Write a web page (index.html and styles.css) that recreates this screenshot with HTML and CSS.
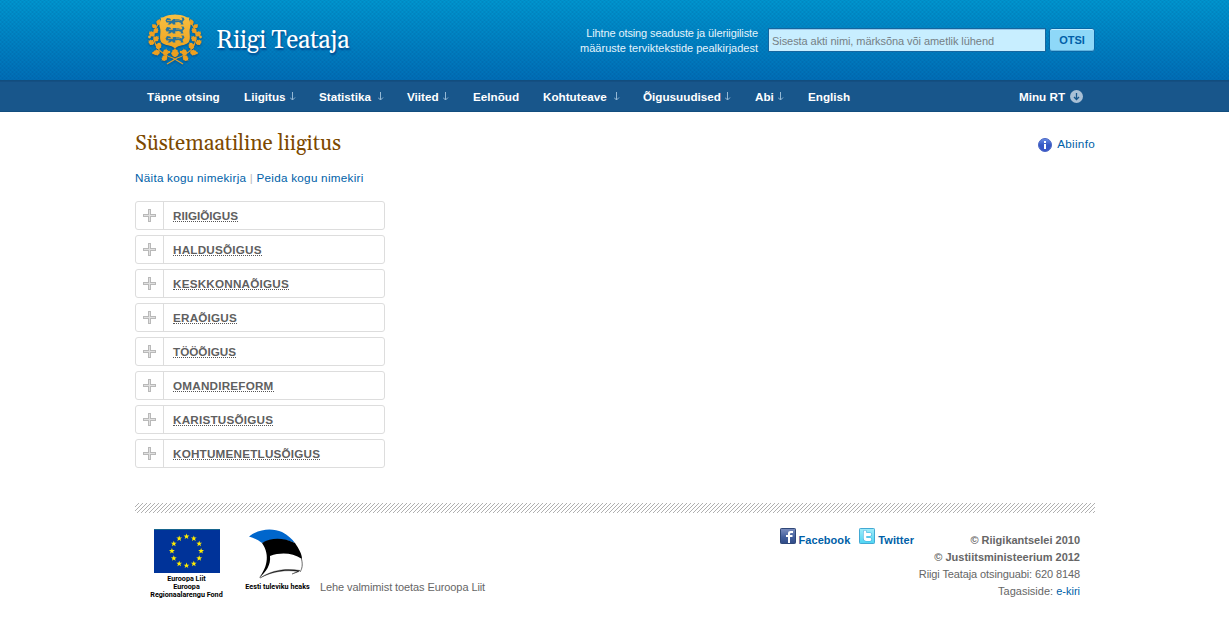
FILE: index.html
```html
<!DOCTYPE html>
<html lang="et">
<head>
<meta charset="utf-8">
<title>Riigi Teataja</title>
<link rel="stylesheet" href="styles.css">
</head>
<body>
<header class="header">
  <div class="wrap header-row">
    <a class="brand">
      <svg class="crest" width="56" height="54" viewBox="0 0 56 54">
        <defs>
          <linearGradient id="gold" x1="0" y1="0" x2="0" y2="54" gradientUnits="userSpaceOnUse"><stop offset="0" stop-color="#f8c144"/><stop offset="1" stop-color="#e8950f"/></linearGradient>
          <path id="leaf" fill="#ecA020" d="M0 0C-1-1-2.6-.6-2.3-2.2C-4-3-3-4.500-2.200-4.600C-3-6.300-1.300-6.600-.8-6.500L0-8L.8-6.500C1.300-6.600 3-6.300 2.200-4.600C3-4.500 4-3 2.300-2.200C2.600-.6 1-1 0 0Z"/>
          <g id="branch">
            <path d="M36 51L26 45C16 42 9 37 7 26C6 20 9 13 13 9" fill="none" stroke="#e8a024" stroke-width="1.200"/>
            <use href="#leaf" transform="translate(11 12) rotate(15) scale(.8)"/>
            <use href="#leaf" transform="translate(9 15) rotate(-45) scale(.7)"/>
            <use href="#leaf" transform="translate(7 20) rotate(40) scale(.8)"/>
            <use href="#leaf" transform="translate(7 23) rotate(-48) scale(.85)"/>
            <use href="#leaf" transform="translate(7 28) rotate(45) scale(.85)"/>
            <use href="#leaf" transform="translate(7 31) rotate(-60) scale(.85)"/>
            <use href="#leaf" transform="translate(10 36) rotate(28) scale(.95)"/>
            <use href="#leaf" transform="translate(13 39) rotate(-100) scale(.95)"/>
            <use href="#leaf" transform="translate(18 43) rotate(10) scale(.95)"/>
            <use href="#leaf" transform="translate(20 43) rotate(-130) scale(.9)"/>
            <circle cx="2.500" cy="24" r="1.400"/><circle cx="12" cy="31" r="1.200"/><circle cx="22" cy="39" r="1.300"/><circle cx="6.500" cy="40" r="1.300"/>
          </g>
          <path id="lion" d="M0 3L1.500 .5L4.500 1L6 3L8 1.500L13 1.500L16 3L17 1.500L15.500 0L18 0L19 2L17 4.500L18 7H15L15.500 5.500L13 4.500L9.500 5L10 7H7.500L6.500 5.500L4.500 7H2L4 5L1 5Z"/>
        </defs>
        <g fill="url(#gold)">
          <use href="#branch"/>
          <use href="#branch" transform="matrix(-1 0 0 1 56 0)"/>
          <path d="M13.500 4.500C17 5 19 1.800 23 2C26 2 27 1.600 28 1.600C29 1.600 30 2 33 2C37 1.800 39 5 42.500 4.500C41 8 45 11 43 15C41.500 20 44.500 25 41.500 29.500C38 33 32 31.500 28 35.500C24 31.500 18 33 14.500 29.500C11.500 25 14.500 20 13 15C11 11 15 8 13.500 4.500Z"/>
          <use href="#leaf" transform="translate(28 44.500) scale(1.200)"/>
        </g>
        <g fill="#2574a0"><use href="#lion" x="18.500" y="4.500"/><use href="#lion" x="18.500" y="13.500"/><use href="#lion" x="18.500" y="22.500"/></g>
        <path d="M20 7.500H25M28 7H33M22 16.500H26M29 16H34M21 25.500H26M29 25H33" stroke="#d9a437" stroke-width=".8"/>
      </svg>
      <span class="brand-name">Riigi Teataja</span>
    </a>
    <form class="search">
      <label class="search-label" for="q"><span class="tight">Lihtne otsing seaduste ja üleriigiliste</span><br>määruste terviktekstide pealkirjadest</label>
      <input class="search-input" id="q" type="text" placeholder="Sisesta akti nimi, märksõna või ametlik lühend">
      <button class="search-button" type="button">OTSI</button>
    </form>
  </div>
</header>
<svg width="0" height="0" class="sprite">
  <symbol id="down" viewBox="0 0 6 9"><path d="M2.500 0V8M0 5.500L2.500 8L5 5.500" fill="none" stroke="#94b8d5"/></symbol>
  <symbol id="plus" viewBox="0 0 13 13"><path d="M5 0H8V5H13V8H8V13H5V8H0V5H5Z" fill="#b9b9b9"/><path d="M6 1H7V6H12V7H7V12H6V7H1V6H6Z" fill="#e0e0e0"/></symbol>
</svg>
<nav class="nav">
  <div class="wrap nav-row">
    <a class="nav-item">Täpne otsing</a>
    <a class="nav-item">Liigitus<svg class="down"><use href="#down"/></svg></a>
    <a class="nav-item">Statistika<svg class="down wide"><use href="#down"/></svg></a>
    <a class="nav-item">Viited<svg class="down"><use href="#down"/></svg></a>
    <a class="nav-item">Eelnõud</a>
    <a class="nav-item">Kohtuteave<svg class="down wide"><use href="#down"/></svg></a>
    <a class="nav-item">Õigusuudised<svg class="down"><use href="#down"/></svg></a>
    <a class="nav-item">Abi<svg class="down"><use href="#down"/></svg></a>
    <a class="nav-item">English</a>
    <a class="nav-item nav-user">Minu RT<svg class="user-icon" viewBox="0 0 13 13"><circle cx="6.500" cy="6.500" r="6.500" fill="#a9c0d6"/><path d="M6.500 3V9.500M4 7L6.500 9.500L9 7" fill="none" stroke="#18568b" stroke-width="1.300"/></svg></a>
  </div>
</nav>
<main class="wrap main">
  <div class="title-row">
    <h1 class="title">Süstemaatiline liigitus</h1>
    <a class="help"><svg width="14" height="14" viewBox="0 0 14 14"><defs><linearGradient id="ball" x1="0" y1="0" x2="0" y2="1"><stop offset="0" stop-color="#6d8fe6"/><stop offset=".5" stop-color="#3458c4"/><stop offset="1" stop-color="#3a55c8"/></linearGradient></defs><circle cx="7" cy="7" r="6.500" fill="url(#ball)" stroke="#4a66c4"/><path d="M6 3H8V5H6ZM6 6H8V11H6Z" fill="#fff"/></svg><span class="help-text">Abiinfo</span></a>
  </div>
  <p class="toggles"><a>Näita kogu nimekirja</a> <span class="bar">|</span> <a>Peida kogu nimekiri</a></p>
  <ul class="list">
    <li class="entry"><span class="entry-icon"><svg width="13" height="13"><use href="#plus"/></svg></span><a class="entry-name snug">RIIGIÕIGUS</a></li>
    <li class="entry"><span class="entry-icon"><svg width="13" height="13"><use href="#plus"/></svg></span><a class="entry-name">HALDUSÕIGUS</a></li>
    <li class="entry"><span class="entry-icon"><svg width="13" height="13"><use href="#plus"/></svg></span><a class="entry-name">KESKKONNAÕIGUS</a></li>
    <li class="entry"><span class="entry-icon"><svg width="13" height="13"><use href="#plus"/></svg></span><a class="entry-name">ERAÕIGUS</a></li>
    <li class="entry"><span class="entry-icon"><svg width="13" height="13"><use href="#plus"/></svg></span><a class="entry-name snug">TÖÖÕIGUS</a></li>
    <li class="entry"><span class="entry-icon"><svg width="13" height="13"><use href="#plus"/></svg></span><a class="entry-name">OMANDIREFORM</a></li>
    <li class="entry"><span class="entry-icon"><svg width="13" height="13"><use href="#plus"/></svg></span><a class="entry-name">KARISTUSÕIGUS</a></li>
    <li class="entry"><span class="entry-icon"><svg width="13" height="13"><use href="#plus"/></svg></span><a class="entry-name">KOHTUMENETLUSÕIGUS</a></li>
  </ul>
</main>
<footer class="wrap footer">
  <svg class="hatch" width="960" height="10"><defs><pattern id="stripes" width="4" height="4" patternUnits="userSpaceOnUse"><path d="M3 0h1v1h-1zM2 1h1v1h-1zM1 2h1v1h-1zM0 3h1v1h-1z" fill="#b0b0b0"/></pattern></defs><rect width="960" height="10" fill="url(#stripes)"/></svg>
  <div class="footer-row">
    <div class="fund">
      <svg width="66" height="44" viewBox="0 0 66 44">
        <defs><path id="star" d="M0-3L.75-.95L2.900-.9L1.200.4L1.800 2.500L0 1.250L-1.800 2.500L-1.200.4L-2.900-.9L-.75-.95Z" fill="#ffed00"/></defs>
        <rect width="66" height="44" fill="#039"/><path d="M0 .5H66" stroke="#17658e"/>
        <use href="#star" x="32.500" y="7.500"/><use href="#star" x="39.800" y="9.400"/><use href="#star" x="45.200" y="14.700"/><use href="#star" x="47.100" y="22"/><use href="#star" x="45.200" y="29.300"/><use href="#star" x="39.800" y="34.700"/><use href="#star" x="32.500" y="36.600"/><use href="#star" x="25.200" y="34.700"/><use href="#star" x="19.800" y="29.300"/><use href="#star" x="17.900" y="22"/><use href="#star" x="19.800" y="14.700"/><use href="#star" x="25.200" y="9.400"/>
      </svg>
      <span class="caption">Euroopa Liit<br>Euroopa<br>Regionaalarengu Fond</span>
    </div>
    <div class="future">
      <svg class="swallow" width="56" height="51" viewBox="0 0 56 51">
        <path d="M1 7.500C12-1 25-1 34 3C40 6 44 10 47 14C34 9 24 10 14 14C10 11 6 9 1 7.500Z" fill="#0066cc"/>
        <path d="M14 14C24 8 36 9 47 14C51 20 54 25 54 30C44 24 34 23 22 27C23 36 18 43 11 49C18 40 23 27 14 14Z"/>
        <path d="M53.500 30C55 36 54 40 52 43" fill="none" stroke="#444" stroke-width=".8"/>
        <path d="M12 49C24 41 38 39 52 41.500L44 45L51 42.500C38 40.500 25 42 12 49Z" fill="#222" stroke="#222" stroke-width=".4"/>
      </svg>
      <span class="caption">Eesti tuleviku heaks</span>
    </div>
    <p class="support">Lehe valmimist toetas Euroopa Liit</p>
    <div class="social">
      <a class="social-link"><svg width="16" height="16" viewBox="0 0 16 16"><defs><linearGradient id="fb" x1="0" y1="0" x2="0" y2="1"><stop offset="0" stop-color="#7d8fbf"/><stop offset=".6" stop-color="#405c9b"/><stop offset="1" stop-color="#314c87"/></linearGradient></defs><rect x=".5" y=".5" width="15" height="15" rx=".8" fill="url(#fb)" stroke="#2f4778"/><path d="M8 15V9H6V7H8V5Q8 3 10.500 3H13V5H11Q10 5 10 6V7H12.500V9H10V15Z" fill="#fff"/></svg>Facebook</a>
      <a class="social-link"><svg width="16" height="16" viewBox="0 0 16 16"><defs><linearGradient id="tw" x1="0" y1="0" x2="0" y2="1"><stop offset="0" stop-color="#a1ecfa"/><stop offset="1" stop-color="#4ed5f3"/></linearGradient></defs><rect x=".5" y=".5" width="15" height="15" rx=".8" fill="url(#tw)" stroke="#43a9d3"/><path d="M6 4V10Q6 11.500 7.500 11.500H11M6 6.500H11" fill="none" stroke="#43aede" stroke-width="4" stroke-linecap="round"/><path d="M6 4V10Q6 11.500 7.500 11.500H11M6 6.500H11" fill="none" stroke="#fff" stroke-width="2.800" stroke-linecap="round"/></svg>Twitter</a>
    </div>
    <div class="contact"><b>© Riigikantselei 2010</b><br><b>© Justiitsministeerium 2012</b><br><span class="tight">Riigi Teataja otsinguabi: 620 8148</span><br>Tagasiside: <a>e-kiri</a></div>
  </div>
</footer>
</body>
</html>
```
FILE: styles.css
```css
body { margin: 0; background: #fff; color: #666; font: 11px/17px "Liberation Sans", Arial, sans-serif; }
a { color: #005fa8; text-decoration: none; }
.wrap { width: 960px; margin: 0 0 0 135px; }
.sprite { display: block; height: 0; }
.tight { letter-spacing: -.11px; }
.header { height: 80px; background: repeating-linear-gradient(45deg, rgba(0,30,90,.05) 0 1px, transparent 1px 2.828px), repeating-linear-gradient(-45deg, rgba(0,30,90,.05) 0 1px, transparent 1px 2.828px), linear-gradient(#0096cf, #006fb7); }
.header-row { display: flex; justify-content: space-between; }
.brand { display: flex; padding: 13px 0 0 12px; }
.crest { filter: drop-shadow(0 1px 1px rgba(0,50,110,.6)); }
.brand-name { margin: 11px 0 0 13px; color: #fff; font: 25px/34px Gelasio, Georgia, "Liberation Serif", serif; letter-spacing: -.5px; white-space: nowrap; text-shadow: 1px 2px 2px #00468c; }
.search { display: flex; padding-top: 28px; }
.search-label { margin: -2px 10px 0 0; color: #e4f4fc; line-height: 15px; text-align: right; }
.search-input { box-sizing: border-box; width: 278px; height: 24px; margin: 0 3px 0 0; padding: 3px 2px 1px 3px; border: 1px solid #15669f; border-radius: 0; background: #c8eeff; box-shadow: inset 0 1px #98caeb; color: #666; font: 11px "Liberation Sans", Arial, sans-serif; letter-spacing: -.065px; }
.search-input::placeholder { color: #757f85; }
.search-button { box-sizing: border-box; width: 46px; height: 24px; padding: 0; border: 1px solid #0868a7; border-radius: 3px; background: #8ed8f8; box-shadow: inset 0 1px #c3edff, inset 0 -1px #62b4de; color: #005fa8; font: bold 11px "Liberation Sans", Arial, sans-serif; }
.nav { box-sizing: border-box; height: 32px; border-top: 1px solid #124d7e; border-bottom: 1px solid #124d7e; background: #18568b; box-shadow: inset 0 1px #154f82; }
.nav-row { display: grid; grid-template-columns: 97px 75px 88px 66px 70px 100px 112px 53px 211px auto; box-sizing: border-box; padding-left: 12px; }
.nav-item { display: flex; align-items: center; height: 30px; color: #fff; font-size: 11.700px; font-weight: bold; white-space: nowrap; }
.down { width: 6px; height: 9px; margin-left: 4.500px; }
.down.wide { margin-left: 7px; }
.user-icon { width: 13px; height: 13px; margin-left: 5px; }
.main { height: 391px; }
.title-row { display: flex; justify-content: space-between; padding-top: 19px; }
.title { margin: 0; color: #7d4900; font: 21px/27px Gelasio, Georgia, "Liberation Serif", serif; letter-spacing: -.03px; white-space: nowrap; }
.help { display: flex; align-items: center; height: 27px; gap: 5px; font-size: 11.700px; letter-spacing: .3px; }
.help-text { margin-top: -2px; }
.toggles { margin: 11px 0 14px; font-size: 11.700px; line-height: 18px; letter-spacing: .28px; word-spacing: -.1px; }
.bar { color: #bbb; }
.list { display: grid; gap: 5px; width: 250px; margin: 0; padding: 0; list-style: none; }
.entry { display: flex; box-sizing: border-box; height: 29px; border: 1px solid #ddd; border-radius: 3px; }
.entry-icon { display: flex; align-items: center; justify-content: center; width: 27px; border-right: 1px solid #ddd; }
.entry-name { align-self: flex-start; height: 11px; margin: 8px 0 0 9px; border-bottom: 1px dotted #555; color: #5f5f5f; font-size: 11.700px; font-weight: bold; line-height: 12px; letter-spacing: .21px; white-space: nowrap; }
.snug { letter-spacing: 0; }
.hatch { display: block; }
.footer-row { display: flex; align-items: flex-start; padding-top: 16px; }
.fund { display: flex; flex-direction: column; align-items: center; width: 76px; margin-left: 13.500px; }
.future { display: flex; flex-direction: column; align-items: center; width: 68px; margin-left: 19px; }
.swallow { margin-right: 3px; }
.caption { margin-top: 2px; color: #000; font: bold 7.200px/8px Roboto, sans-serif; text-align: center; white-space: nowrap; }
.future .caption { margin-top: 3px; }
.support { margin: 50px 0 0 8.500px; letter-spacing: -.09px; white-space: nowrap; }
.social { display: flex; gap: 9px; margin: -1px 0 0 auto; font-weight: bold; }
.social-link { display: flex; align-items: flex-start; gap: 3px; line-height: 24px; letter-spacing: .06px; }
.contact { width: 166px; margin: 3px 15px 0 0; text-align: right; white-space: nowrap; }
```
